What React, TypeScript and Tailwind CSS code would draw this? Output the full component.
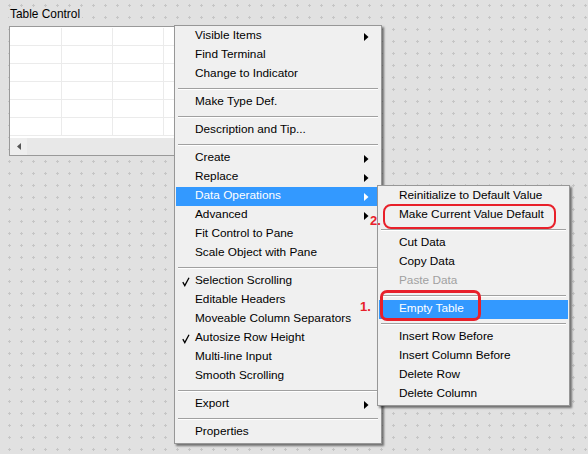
import React from "react";

type Item =
  | { sep: true }
  | { label: string; check?: boolean; arrow?: boolean; active?: boolean; disabled?: boolean };

const mainItems: Item[] = [
  { label: "Visible Items", arrow: true },
  { label: "Find Terminal" },
  { label: "Change to Indicator" },
  { sep: true },
  { label: "Make Type Def." },
  { sep: true },
  { label: "Description and Tip..." },
  { sep: true },
  { label: "Create", arrow: true },
  { label: "Replace", arrow: true },
  { label: "Data Operations", arrow: true, active: true },
  { label: "Advanced", arrow: true },
  { label: "Fit Control to Pane" },
  { label: "Scale Object with Pane" },
  { sep: true },
  { label: "Selection Scrolling", check: true },
  { label: "Editable Headers" },
  { label: "Moveable Column Separators" },
  { label: "Autosize Row Height", check: true },
  { label: "Multi-line Input" },
  { label: "Smooth Scrolling" },
  { sep: true },
  { label: "Export", arrow: true },
  { sep: true },
  { label: "Properties" },
];

const subItems: Item[] = [
  { label: "Reinitialize to Default Value" },
  { label: "Make Current Value Default" },
  { sep: true },
  { label: "Cut Data" },
  { label: "Copy Data" },
  { label: "Paste Data", disabled: true },
  { sep: true },
  { label: "Empty Table", active: true },
  { sep: true },
  { label: "Insert Row Before" },
  { label: "Insert Column Before" },
  { label: "Delete Row" },
  { label: "Delete Column" },
];

function Check() {
  return (
    <svg className="absolute left-[6px] top-[5px]" width="8" height="10" viewBox="0 0 8 10">
      <path d="M0.8 5.2 L2.8 8.6 L7 0.8" fill="none" stroke="#000" strokeWidth="1.3" />
    </svg>
  );
}

function Arrow({ white }: { white?: boolean }) {
  return (
    <svg className="ml-auto mt-px" width="5" height="8" viewBox="0 0 5 8">
      <path d="M0 0 L4.5 4 L0 8 Z" fill={white ? "#ffffff" : "#000000"} />
    </svg>
  );
}

function MenuList({ items, textPad }: { items: Item[]; textPad: string }) {
  return (
    <div className="flex flex-col">
      {items.map((it, i) => {
        if ("sep" in it) {
          return (
            <div key={i} className="h-[9px] px-[2px] pt-[4px]">
              <div className="h-[2px] border-t border-b border-t-[#a0a0a0] border-b-white" />
            </div>
          );
        }
        const cls = it.active
          ? "bg-[#3399ff] text-white"
          : it.disabled
          ? "text-[#a0a0a0]"
          : "text-black";
        return (
          <div
            key={i}
            className={`relative flex h-[19px] items-center whitespace-nowrap pb-px pr-[11px] ${textPad} ${cls}`}
          >
            {it.check && <Check />}
            <span>{it.label}</span>
            {it.arrow && <Arrow white={it.active} />}
          </div>
        );
      })}
    </div>
  );
}

function DotPattern() {
  return (
    <svg className="absolute inset-0" width="588" height="454">
      <defs>
        <pattern id="dots" x="0" y="0" width="12" height="12" patternUnits="userSpaceOnUse">
          <rect x="8" y="5" width="3" height="1" fill="#c6c6c6" />
          <rect x="9" y="4" width="1" height="3" fill="#c6c6c6" />
        </pattern>
      </defs>
      <rect width="588" height="454" fill="url(#dots)" />
    </svg>
  );
}

export default function App() {
  const rows = [0, 1, 2, 3, 4, 5];
  const cols = [0, 1, 2, 3];
  return (
    <div className="relative h-[454px] w-[588px] overflow-hidden bg-[#e1e1e1] font-['Liberation_Sans',Arial,sans-serif] text-[11.8px] leading-none">
      <DotPattern />

      {/* Table control on the front panel */}
      <div className="relative flex flex-col pl-[9px] pt-[9px]">
        <div className="h-[17px] w-fit bg-[#e1e1e1] pl-px pr-[2px] text-[11.9px] text-black">Table Control</div>
        <div className="flex w-[200px] flex-col border border-[#999999] bg-white">
          <div className="flex flex-col pt-px">
            {rows.map((r) => (
              <div key={r} className="flex h-[18px] border-b border-[#ebebeb]">
                {cols.map((c) => (
                  <div
                    key={c}
                    className={`h-full shrink-0 border-r border-[#ebebeb] ${c === 0 ? "w-[52px]" : "w-[51px]"}`}
                  />
                ))}
              </div>
            ))}
          </div>
          <div className="h-[2px]" />
          <div className="flex h-[17px] bg-[#e8e8e8]">
            <div className="flex w-[17px] items-center justify-center bg-[#eeeeee]">
              <svg width="4" height="7" viewBox="0 0 4 7">
                <path d="M4 0 L0 3.5 L4 7 Z" fill="#555555" />
              </svg>
            </div>
          </div>
        </div>
      </div>

      {/* Main context menu */}
      <div className="absolute left-[174px] top-[25px] w-[208px] border border-[#979797] bg-[#f0f0f0] p-px shadow-[2px_2px_2px_rgba(0,0,0,0.5)]">
        <MenuList items={mainItems} textPad="pl-[19px]" />
      </div>

      {/* Submenu */}
      <div className="absolute left-[377px] top-[185px] w-[193px] border border-[#979797] bg-[#f0f0f0] p-px shadow-[2px_2px_2px_rgba(0,0,0,0.5)]">
        <MenuList items={subItems} textPad="pl-[20px]" />
      </div>

      {/* Red annotations */}
      <div className="absolute left-[383px] top-[204px] h-[25px] w-[173px] rounded-[8px] border-2 border-[#e8202a]" />
      <div className="absolute left-[380px] top-[290px] h-[31px] w-[101px] rounded-[7px] border-[3px] border-[#e8202a]" />
      <div className="absolute left-[370px] top-[214px] text-[13px] font-bold text-[#e8202a]">2.</div>
      <div className="absolute left-[360px] top-[300px] text-[13px] font-bold text-[#e8202a]">1.</div>
    </div>
  );
}
